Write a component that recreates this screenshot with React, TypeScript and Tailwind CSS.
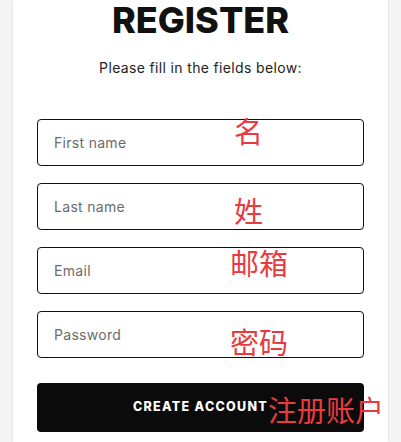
const fields = ['First name', 'Last name', 'Email', 'Password'];

const notes = [
  { text: '名', cls: 'left-[234px] top-[116px] text-[29px]' },
  { text: '姓', cls: 'left-[234px] top-[196px] text-[29px]' },
  { text: '邮箱', cls: 'left-[230px] top-[248px] text-[29px]' },
  { text: '密码', cls: 'left-[230px] top-[327px] text-[29px]' },
  { text: '注册账户', cls: 'left-[268px] top-[395px] text-[29px]' },
];

export default function App() {
  return (
    <div className="relative h-[442px] w-[401px] overflow-hidden bg-[#f4f4f4] font-['Inter',sans-serif]">
      <div className="ml-[13px] h-full w-[375px] bg-white px-6 pt-[2px] shadow-[0_0_2px_rgba(0,0,0,0.12)]">
        <h1 className="text-center text-[36px] font-extrabold leading-none text-[#111]">
          REGISTER
        </h1>
        <p className="mt-[20px] text-center text-[14px] leading-5 tracking-[0.35px] text-[#222]">
          Please fill in the fields below:
        </p>

        <form className="mt-[41px] flex flex-col gap-[17px]" onSubmit={(e) => e.preventDefault()}>
          {fields.map((f) => (
            <input
              key={f}
              type={f === 'Password' ? 'password' : f === 'Email' ? 'email' : 'text'}
              placeholder={f}
              className="h-[47px] w-full rounded-[4px] border border-[#111] bg-white px-4 text-[14px] tracking-[0.3px] text-[#111] outline-none placeholder:text-[#6b6b6b]"
            />
          ))}
          <button
            type="submit"
            className="mt-2 h-[49px] w-full rounded-[4px] bg-[#0b0b0b] text-[12.5px] font-extrabold tracking-[1.3px] text-white"
          >
            CREATE ACCOUNT
          </button>
        </form>
      </div>

      {notes.map((n) => (
        <span
          key={n.text}
          className={`pointer-events-none absolute leading-none text-[#e83b3f] font-['Noto_Sans_CJK_SC',sans-serif] ${n.cls}`}
        >
          {n.text}
        </span>
      ))}
    </div>
  );
}
